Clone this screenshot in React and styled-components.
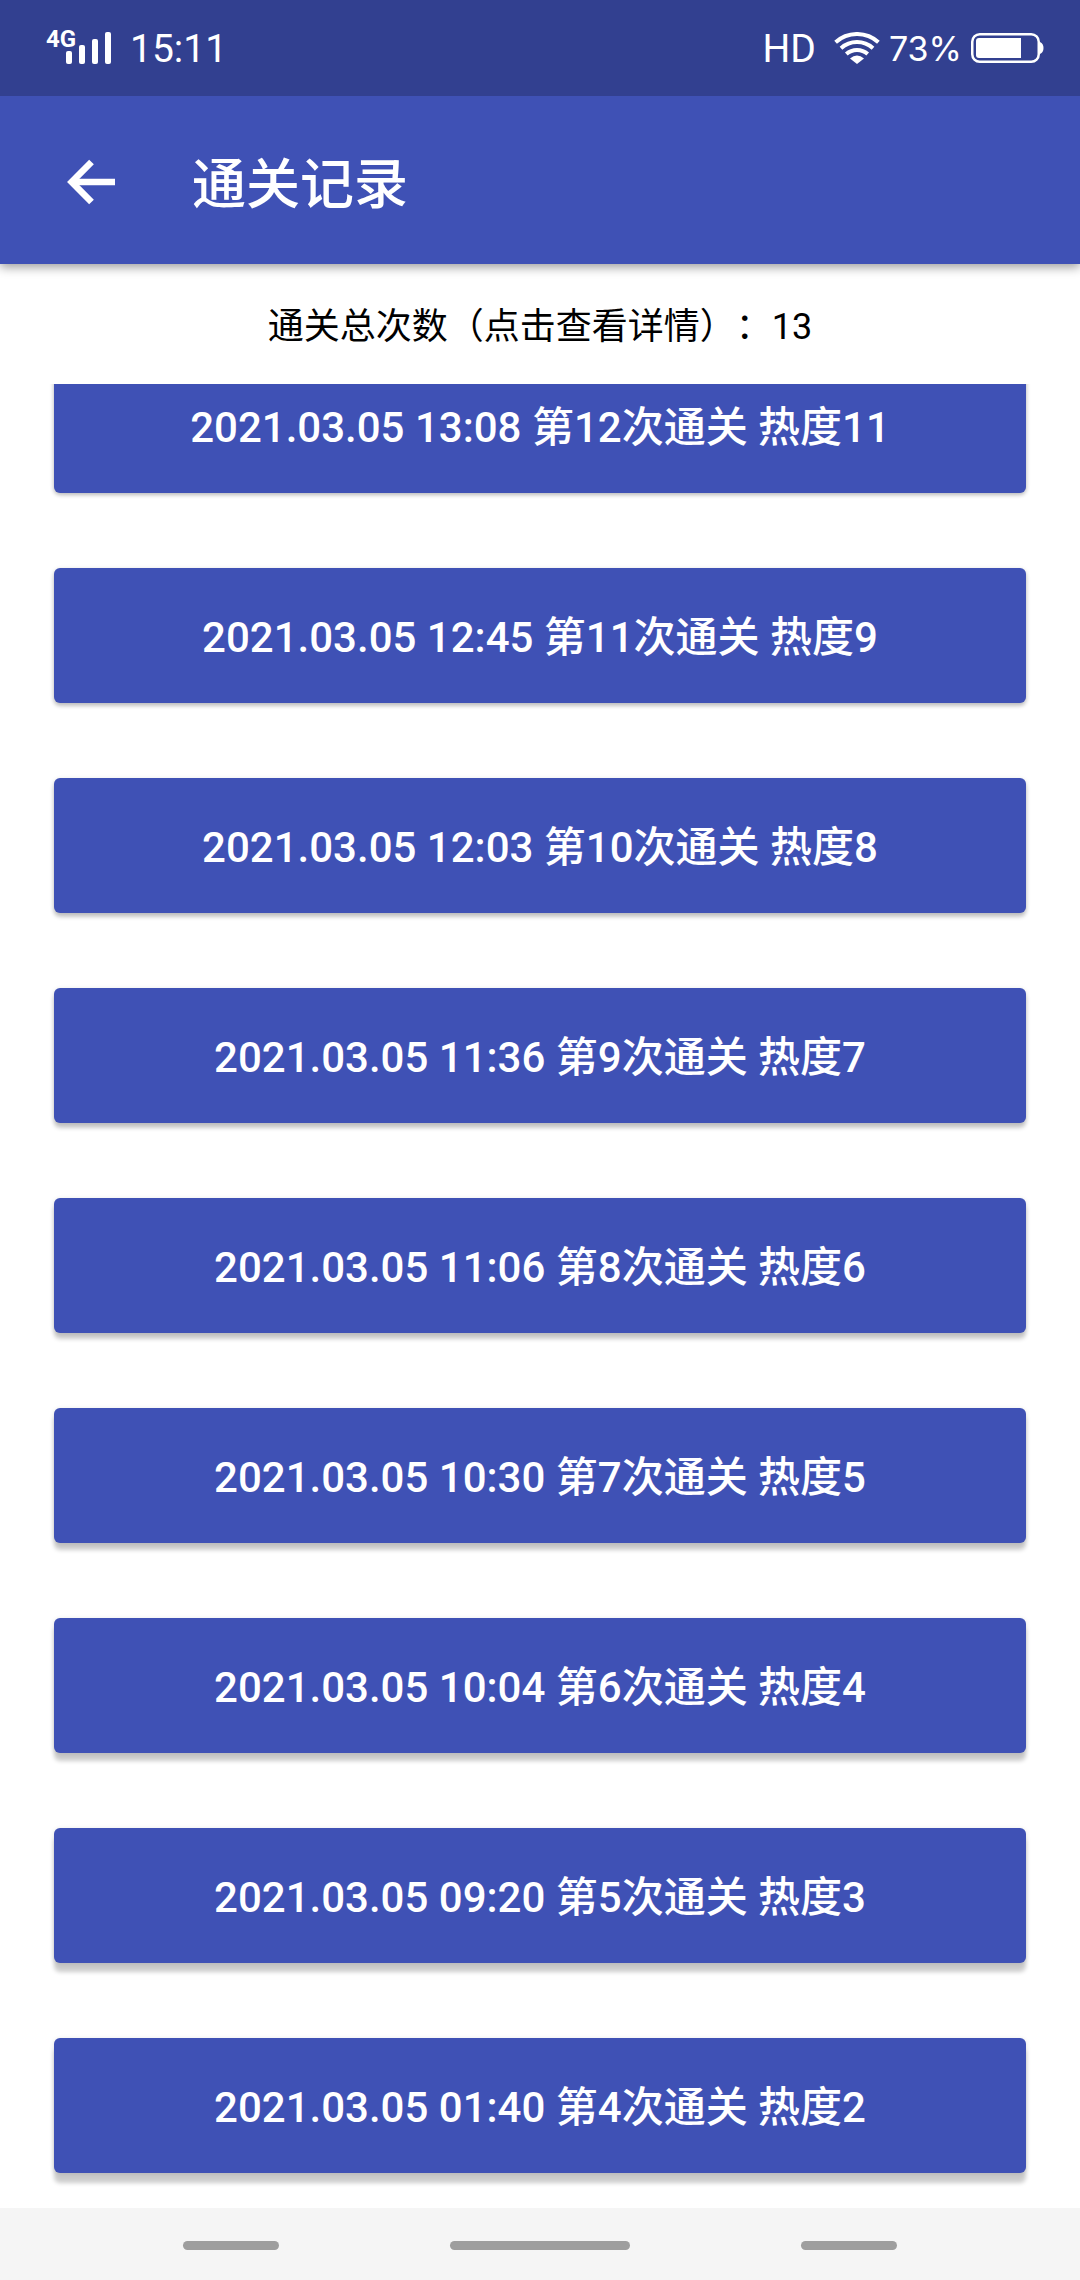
import React from 'react';
import styled, { createGlobalStyle } from 'styled-components';

const GlobalStyle = createGlobalStyle`
  * { box-sizing: border-box; }
  body {
    margin: 0;
    background: #fff;
    font-family: Roboto, "Noto Sans CJK SC", sans-serif;
    text-spacing-trim: space-all;
  }
`;

const Screen = styled.div`
  display: flex;
  flex-direction: column;
  height: 100vh;
`;

const StatusBar = styled.header`
  flex: none;
  position: relative;
  z-index: 2;
  display: flex;
  align-items: center;
  justify-content: space-between;
  height: 96px;
  padding: 0 36px 0 45px;
  background: #324090;
  color: #fff;
`;

const StatusGroup = styled.div`
  display: flex;
  align-items: center;
  gap: ${({ $gap }) => $gap}px;
`;

const StatusText = styled.span`
  padding-top: 2px;
  font-size: 39px;
  line-height: 48px;
`;

const BatteryLevel = styled(StatusText)`
  font-family: Inter, sans-serif;
  font-size: 34px;
`;

const Icon = styled.svg`
  display: block;
  flex: none;
`;

const AppBar = styled.div`
  flex: none;
  position: relative;
  z-index: 1;
  display: flex;
  align-items: center;
  gap: 77px;
  height: 168px;
  padding: 3px 67px 0;
  background: #3f51b5;
  color: #fff;
  box-shadow: 0 3px 10px rgba(0, 0, 0, 0.4);
`;

const BackButton = styled.button`
  padding: 0;
  border: 0;
  background: none;
  color: inherit;
`;

const Title = styled.h1`
  margin: 0;
  padding-top: 8px;
  font-size: 54px;
  font-weight: 500;
  line-height: 72px;
`;

const Summary = styled.p`
  flex: none;
  margin: 0;
  padding: 39px 0 33px;
  font-size: 36px;
  line-height: 48px;
  text-align: center;
  color: #000;
`;

const RecordList = styled.ul`
  flex: 1;
  min-height: 0;
  display: flex;
  flex-direction: column;
  justify-content: flex-end;
  gap: 75px;
  margin: 0;
  padding: 0 54px 35px;
  overflow: hidden;
  list-style: none;
`;

const RecordItem = styled.li`
  flex: none;
  display: flex;
`;

const RecordButton = styled.button`
  flex: 1;
  height: 135px;
  padding: 4px 24px 0;
  border: 0;
  border-radius: 6px;
  background: #3f51b5;
  color: #fff;
  font: 500 42px/48px Roboto, "Noto Sans CJK SC", sans-serif;
  box-shadow:
    0 ${({ $depth }) => $depth}px 4px rgba(0, 0, 0, 0.2),
    0 1px 5px rgba(0, 0, 0, 0.12);
`;

const NavBar = styled.nav`
  flex: none;
  display: flex;
  align-items: center;
  justify-content: center;
  gap: 171px;
  height: 72px;
  padding-top: 3px;
  background: #f5f5f5;
`;

const NavPill = styled.button`
  width: ${({ $wide }) => ($wide ? 180 : 96)}px;
  height: 9px;
  padding: 0;
  border: 0;
  border-radius: 5px;
  background: #9e9e9e;
`;

const records = [
  { time: '2021.03.05 13:08', run: 12, heat: 11 },
  { time: '2021.03.05 12:45', run: 11, heat: 9 },
  { time: '2021.03.05 12:03', run: 10, heat: 8 },
  { time: '2021.03.05 11:36', run: 9, heat: 7 },
  { time: '2021.03.05 11:06', run: 8, heat: 6 },
  { time: '2021.03.05 10:30', run: 7, heat: 5 },
  { time: '2021.03.05 10:04', run: 6, heat: 4 },
  { time: '2021.03.05 09:20', run: 5, heat: 3 },
  { time: '2021.03.05 01:40', run: 4, heat: 2 },
];

const shadowDepth = (index) => 2 + index;

function SignalIcon() {
  return (
    <Icon width="67" height="48" viewBox="0 0 67 48" fill="#fff" aria-hidden="true">
      <text x="1" y="23" fontSize="24" fontWeight="700" fontFamily="Roboto, sans-serif">4G</text>
      <rect x="21" y="27" width="6" height="13" rx="2" />
      <rect x="34" y="21" width="6" height="19" rx="2" />
      <rect x="47" y="15" width="6" height="25" rx="2" />
      <rect x="60" y="8" width="6" height="32" rx="2" />
    </Icon>
  );
}

function WifiIcon() {
  return (
    <Icon width="46" height="32" viewBox="0 0 46 32" fill="none" stroke="#fff" strokeWidth="4" aria-hidden="true">
      <path d="M1.6 10.2A32 32 0 0 1 44.4 10.2" />
      <path d="M7 16.2A24 24 0 0 1 39 16.2" />
      <path d="M12.3 22.1A16 16 0 0 1 33.7 22.1" />
      <path d="M16 26.5Q23 20.5 30 26.5L23 32Z" fill="#fff" stroke="none" />
    </Icon>
  );
}

function BatteryIcon() {
  return (
    <Icon width="73" height="30" viewBox="0 0 73 30" aria-hidden="true">
      <rect x="1.25" y="1.25" width="66.5" height="27.5" rx="7.5" fill="none" stroke="#fff" strokeWidth="2.5" />
      <path d="M8 5H50V25H8Q5 25 5 22V8Q5 5 8 5Z" fill="#fff" />
      <path d="M69 9Q72.5 10.5 72.5 15T69 21Z" fill="#fff" />
    </Icon>
  );
}

function BackIcon() {
  return (
    <Icon width="48" height="48" viewBox="0 0 48 48" fill="none" stroke="#fff" strokeWidth="6.6" aria-hidden="true">
      <path d="M24.5 4L4.7 24L24.5 44" />
      <path d="M6 24H48" />
    </Icon>
  );
}

export default function App() {
  return (
    <Screen>
      <GlobalStyle />
      <StatusBar>
        <StatusGroup $gap={18}>
          <SignalIcon />
          <StatusText>15:11</StatusText>
        </StatusGroup>
        <StatusGroup $gap={18}>
          <StatusText>HD</StatusText>
          <StatusGroup $gap={9}>
            <WifiIcon />
            <BatteryLevel>73%</BatteryLevel>
            <BatteryIcon />
          </StatusGroup>
        </StatusGroup>
      </StatusBar>
      <AppBar>
        <BackButton type="button" aria-label="返回">
          <BackIcon />
        </BackButton>
        <Title>通关记录</Title>
      </AppBar>
      <Summary>通关总次数（点击查看详情）：13</Summary>
      <RecordList>
        {records.map(({ time, run, heat }, index) => (
          <RecordItem key={run}>
            <RecordButton type="button" $depth={shadowDepth(index)}>
              {`${time} 第${run}次通关 热度${heat}`}
            </RecordButton>
          </RecordItem>
        ))}
      </RecordList>
      <NavBar>
        <NavPill type="button" aria-label="菜单" />
        <NavPill type="button" aria-label="主页" $wide />
        <NavPill type="button" aria-label="后退" />
      </NavBar>
    </Screen>
  );
}
